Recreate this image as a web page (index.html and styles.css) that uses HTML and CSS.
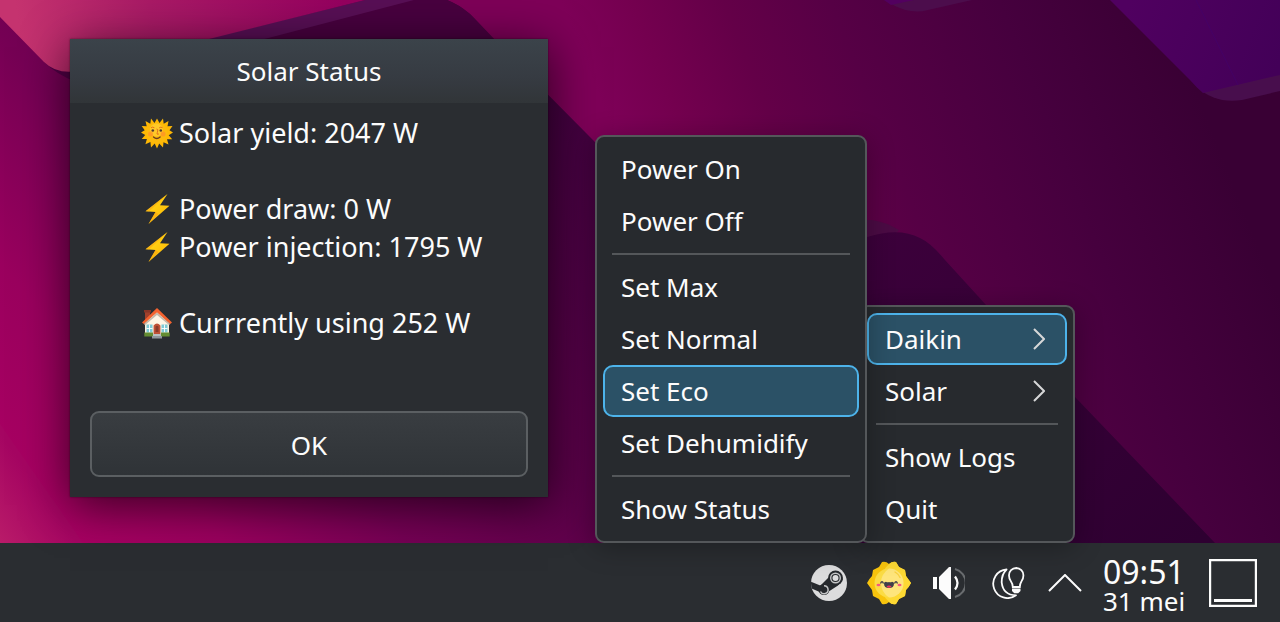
FILE: index.html
```html
<!DOCTYPE html>
<html lang="nl">
<head>
<meta charset="utf-8">
<meta name="viewport" content="width=device-width, initial-scale=1">
<title>Desktop</title>
<link rel="stylesheet" href="styles.css">
</head>
<body>
<svg width="0" height="0" class="defs" aria-hidden="true">
  <defs>
    <linearGradient id="boltFill" x1="0" y1="0" x2="1" y2="1"><stop offset="0" stop-color="#ffe11f"/><stop offset="1" stop-color="#ffb300"/></linearGradient>
    <symbol id="bolt" viewBox="0 0 32 32">
      <path d="M26.500 1 4.500 18.300l10 .6L7.500 31 28.500 12.800l-9.500-.6z" fill="url(#boltFill)"/>
      <path d="M26.500 1 4.500 18.300l3.500.3z M14.500 18.900 7.500 31l10-10z" fill="#f9a312" opacity=".55"/>
    </symbol>
    <symbol id="chevron" viewBox="0 0 12 22"><path d="M1 1 11 11 1 21" fill="none" stroke="#d6d7d8" stroke-width="2"/></symbol>
  </defs>
</svg>

<main class="desktop">
  <svg class="wallpaper" viewBox="0 0 1280 543" preserveAspectRatio="none" aria-hidden="true">
    <defs>
      <linearGradient id="left" gradientUnits="userSpaceOnUse" x1="290" y1="-232" x2="-220" y2="176">
        <stop offset="0" stop-color="#43003f"/><stop offset=".37" stop-color="#5c0049"/><stop offset=".6" stop-color="#750054"/><stop offset=".82" stop-color="#9a005e"/><stop offset="1" stop-color="#a80062"/>
      </linearGradient>
      <linearGradient id="right" gradientUnits="userSpaceOnUse" x1="483" y1="-193" x2="1000" y2="-400">
        <stop offset="0" stop-color="#7e0058"/><stop offset=".12" stop-color="#74004f"/><stop offset=".27" stop-color="#640048"/><stop offset=".45" stop-color="#560045"/><stop offset=".73" stop-color="#46003e"/><stop offset="1" stop-color="#390034"/>
      </linearGradient>
      <linearGradient id="pink" gradientUnits="userSpaceOnUse" x1="20" y1="40" x2="350" y2="0">
        <stop offset="0" stop-color="#c5336f"/><stop offset=".4" stop-color="#a91a66"/><stop offset="1" stop-color="#94005f"/>
      </linearGradient>
      <linearGradient id="corner" gradientUnits="userSpaceOnUse" x1="0" y1="543" x2="52" y2="507">
        <stop offset="0" stop-color="#b91b69"/><stop offset="1" stop-color="#a50562"/>
      </linearGradient>
      <linearGradient id="violet" gradientUnits="userSpaceOnUse" x1="1130" y1="0" x2="1280" y2="60">
        <stop offset="0" stop-color="#500060"/><stop offset="1" stop-color="#430058"/>
      </linearGradient>
      <linearGradient id="dark" gradientUnits="userSpaceOnUse" x1="870" y1="230" x2="1200" y2="540">
        <stop offset="0" stop-color="#3c003b"/><stop offset="1" stop-color="#2e0031"/>
      </linearGradient>
    </defs>
    <rect width="1280" height="543" fill="url(#right)"/>
    <path d="M0 0H447Q458 4 470 14Q480 24 493 39L1000 551H0z" fill="url(#left)"/>
    <path d="M365 0H447Q458 4 470 14Q480 24 520 66L200 60z" fill="#48003f"/>
    <path d="M365 0H414L230 48H170z" fill="#580f55"/>
    <path d="M44 62Q56 74 76 82L110 70z" fill="#500045"/>
    <path d="M0 0H365L209 39 90 68Q60 78 44 62L0 17z" fill="url(#pink)"/>
    <path d="M0 424 83 543H0z" fill="url(#corner)"/>
    <path d="M840 220H872Q886 222 899 230L890 240H840z" fill="#4b0b44"/>
    <path d="M840 245 867 237Q899 227 920 238Q931 243 945 260L987 306 1075 397 1215 543H840z" fill="url(#dark)"/>
    <path d="M884 0 891 4Q911 15 928 10L972 0z" fill="#4c0d4c"/>
    <path d="M884 0 891 5 914 0z" fill="#52005f"/>
    <path d="M1197 87Q1215 104 1242 100L1280 91V70z" fill="#480e4d"/>
    <path d="M1110 0H1280V75L1203 93Q1197 88 1190 80z" fill="url(#violet)"/>
    <path d="M1196 0 1238 85" stroke="#430070" opacity=".5"/>
  </svg>

  <section class="dialog" role="dialog" aria-labelledby="dialog-title">
    <header class="dialog-header"><h1 id="dialog-title" class="dialog-title">Solar Status</h1></header>
    <div class="dialog-body">
      <p class="reading">
        <svg class="emoji" viewBox="0 0 32 32" role="img" aria-label="Sun"><path d="M16 1.500l2.500 4.500L22 1.500l.7 5.200L27.500 4l-1 5.200 5-.2-3 4.200L32 15.500l-4.300 2.700 3.500 4-5.200 0 1.500 5.200-5-2.200L22 30.500l-3.800-4L16 31.500l-2.300-5L10 30.500l-.6-5.400-5 2.200 1.500-5.200-5.200 0 3.500-4L0 15.500l3.700-2.300L.7 9l5 .2L4.500 4l4.800 2.700L10 1.500l3.500 4.500z" fill="#ffb804"/><circle cx="16" cy="16" r="10.500" fill="#fdba0c"/><circle cx="15.500" cy="13" r="6.500" fill="#ffc928"/><circle cx="9.500" cy="17" r="2.500" fill="#ff8f2c" opacity=".7"/><circle cx="22" cy="17" r="2.500" fill="#ff8f2c" opacity=".7"/><circle cx="11.800" cy="13.500" r="1.300" fill="#543930"/><circle cx="19.800" cy="13.500" r="1.300" fill="#543930"/><path d="M10 10.800q1.700-1.300 3.400 0M18.200 10.800q1.700-1.300 3.400 0M15.500 12q1.800 0 1.200 2t-.7 3q1.300.8 2-.4" fill="none" stroke="#e2701d"/><path d="M12.500 20q3.300 3 6.600 0" fill="none" stroke="#6d3d20" stroke-width="1.300" stroke-linecap="round"/></svg>
        <span>Solar yield: 2047 W</span>
      </p>
      <p class="reading spaced"><svg class="emoji" role="img" aria-label="Power"><use href="#bolt"/></svg><span>Power draw: 0 W</span></p>
      <p class="reading"><svg class="emoji" role="img" aria-label="Power"><use href="#bolt"/></svg><span>Power injection: 1795 W</span></p>
      <p class="reading spaced">
        <svg class="emoji" viewBox="0 0 32 32" role="img" aria-label="House"><path d="M4 4h5v11H4z" fill="#a0402c"/><path d="M3 3h7v2.500H3z" fill="#853527"/><path d="M4 16 16 3.500 28 16v13H4z" fill="#fdf1de"/><path d="M6.500 15.500 16 6l9.500 9.500v2h-19z" fill="#fff6e6"/><path d="M16 1 1 15.500l1.800 1.500L16 5.500 29.200 17l1.800-1.500z" fill="#f4622f"/><path d="M16 5.500 2.800 17 4 18 16 8l12 10 1.200-1z" fill="#c7b8a8"/><path d="M5.500 17.500h6v8h-6zM20.500 17.500h6v8h-6z" fill="#7ecbd7"/><path d="M8.500 17.500v8M5.500 21.500h6M23.500 17.500v8M20.500 21.500h6" stroke="#fff" stroke-width=".9"/><path d="M12.600 27.500V18.500Q16 14.500 19.400 18.500v9z" fill="#bf5136"/><path d="M14.500 25v-5.500q1.500-1.500 3 0V25z" fill="#8a3a2a"/><path d="M3.300 25.500h8.700v4H3.300zM20 25.500h8.700v4H20z" fill="#648d32"/><path d="M12 27h8v2h-8z" fill="#b9bfc2"/><path d="M11 29h10v2.500H11z" fill="#90989c"/></svg>
        <span>Currrently using 252 W</span>
      </p>
    </div>
    <footer class="dialog-footer"><button class="ok" type="button">OK</button></footer>
  </section>

  <div class="menus">
    <div class="menu submenu" role="menu" aria-label="Daikin">
      <button class="item" role="menuitem">Power On</button>
      <button class="item" role="menuitem">Power Off</button>
      <hr class="separator">
      <button class="item" role="menuitem">Set Max</button>
      <button class="item" role="menuitem">Set Normal</button>
      <button class="item selected" role="menuitem">Set Eco</button>
      <button class="item" role="menuitem">Set Dehumidify</button>
      <hr class="separator">
      <button class="item" role="menuitem">Show Status</button>
    </div>
    <div class="menu rootmenu" role="menu" aria-label="Tray">
      <button class="item selected" role="menuitem" aria-haspopup="menu">Daikin<svg class="chevron"><use href="#chevron"/></svg></button>
      <button class="item" role="menuitem" aria-haspopup="menu">Solar<svg class="chevron"><use href="#chevron"/></svg></button>
      <hr class="separator">
      <button class="item" role="menuitem">Show Logs</button>
      <button class="item" role="menuitem">Quit</button>
    </div>
  </div>
</main>

<footer class="taskbar">
  <button class="tray" type="button" aria-label="Steam">
    <svg width="38" height="38" viewBox="0 0 38 38">
      <defs><clipPath id="disc"><circle cx="19" cy="19" r="18"/></clipPath></defs>
      <circle cx="19" cy="19" r="18" fill="#dcdcdd"/>
      <g clip-path="url(#disc)" fill="#26292d">
        <circle cx="25.500" cy="14" r="7.500"/>
        <circle cx="14" cy="25.500" r="5.500"/>
        <path d="M18 14 33 15 28 21.500 19.500 27 10 22z"/>
        <path d="M-1 17 14 23 12 29-1 23.500z"/>
      </g>
      <circle cx="25.500" cy="14" r="4.800" fill="none" stroke="#c4c5c6" stroke-width="1.400"/>
      <circle cx="25.500" cy="14" r="3" fill="#dcdcdd"/>
      <path d="M10.500 27.500a4 4 0 1 0 3.500-5.800" fill="none" stroke="#c4c5c6" stroke-width="1.500"/>
    </svg>
  </button>
  <button class="tray" type="button" aria-label="Solar">
    <svg width="44" height="44" viewBox="0 0 44 44"><path d="M22 3Q25.500 0 29 1L32 6 38 9 39 15 44 22Q42 26 39 29L38 35 32 38 29 43Q25 44 22 41Q19 44 15 43L12 38 6 35 5 29 0 22Q2 18 5 15L6 9 12 6 15 1Q19 0 22 3z" fill="#f8c40d"/><path d="M22 3Q25.500 0 29 1L32 6 38 9 39 15 44 22Q42 26 39 29L38 35 32 38 29 43Q25 44 22 41Q14 34 14 22T22 3z" fill="#fdd934"/><circle cx="22" cy="22" r="14.500" fill="#fbdc45"/><path d="M22 7.500a14.500 14.500 0 0 1 0 29Q14 31 14 22T22 7.500z" fill="#fee57c"/><path d="M28 11q3.500 2 5 5.500" fill="none" stroke="#f8d040" stroke-width="1.400" stroke-linecap="round"/><ellipse cx="11.500" cy="24" rx="2" ry="1.200" fill="#f5587f"/><ellipse cx="32.500" cy="24" rx="2" ry="1.200" fill="#f5587f"/><path d="M13.500 22.500q1.500-3.500 3 0M27.500 22.500q1.500-3.500 3 0" fill="none" stroke="#40404a" stroke-width="1.300"/><path d="M17 22.500q0-1.700 2-1.700 1.500.9 3 .3 1.500.6 3-.3 2 0 2 1.700 0 4.500-5 4.500t-5-4.500z" fill="#40404a"/><path d="M19.500 25.500q2.500-2 5 0-2.500 2.500-5 0z" fill="#f4355f"/></svg>
  </button>
  <button class="tray" type="button" aria-label="Volume">
    <svg width="32" height="32" viewBox="0 0 32 32"><path d="M0 10h4v12H0zM6 10 16 0h2v32h-2L6 22z" fill="#fcfcfc"/><path d="M22 9.500q5 6.500 0 13" fill="none" stroke="#fcfcfc" stroke-width="2.200"/><path d="M22 2A14.500 14.500 0 0 1 22 30" fill="none" stroke="#696c6f" stroke-width="2"/></svg>
  </button>
  <button class="tray" type="button" aria-label="Night colour">
    <svg width="34" height="32" viewBox="0 0 34 32" fill="none" stroke="#fcfcfc" stroke-width="1.800"><path d="M14.500 2.500A14.300 14.300 0 1 0 24 28.300Q11 28 9.700 15.500 9.500 7.500 14.500 2.500z" stroke-linejoin="round"/><path d="M20.800 20q0-3-1.800-5.500-2-2.500-2-6A7.300 7.300 0 0 1 24.200 1a7.300 7.300 0 0 1 7.200 7.500q0 3.500-2 6-1.600 2.500-1.600 5.500z"/><path d="M20 21.500h8.500v2.500l-2.300 2.200h-3.900L20 24z" fill="#fcfcfc" stroke="none"/></svg>
  </button>
  <button class="tray narrow" type="button" aria-label="Show hidden icons">
    <svg width="34" height="18" viewBox="0 0 34 18"><path d="M1 17 17 1 33 17" fill="none" stroke="#fcfcfc" stroke-width="2"/></svg>
  </button>
  <button class="clock" type="button"><span class="time">09:51</span><span class="date">31 mei</span></button>
  <button class="show-desktop" type="button" aria-label="Show desktop">
    <svg width="48" height="48" viewBox="0 0 48 48"><path d="M1 1h46v46H1z" fill="none" stroke="#fcfcfc" stroke-width="2.400"/><path d="M5 40h38v3H5z" fill="#fcfcfc"/></svg>
  </button>
</footer>
</body>
</html>
```
FILE: styles.css
```css
* {
  box-sizing: border-box;
}

body {
  margin: 0;
  height: 100vh;
  display: flex;
  flex-direction: column;
  overflow: hidden;
  background: #2a2d31;
  color: #fcfcfc;
  font-family: "Noto Sans", sans-serif;
  font-size: 26px;
}

button {
  margin: 0;
  padding: 0;
  border: 0;
  background: none;
  color: inherit;
  font: inherit;
}

svg {
  display: block;
  flex: none;
}

.defs {
  position: absolute;
}

.desktop {
  position: relative;
  flex: 1;
  min-height: 0;
}

.wallpaper {
  position: absolute;
  inset: 0;
  width: 100%;
  height: 100%;
}

/* Dialog window */
.dialog {
  position: absolute;
  left: 70px;
  top: 39px;
  width: 478px;
  display: flex;
  flex-direction: column;
  background: #2a2d31;
  box-shadow: 0 8px 44px rgba(0, 0, 0, 0.65), 0 0 2px rgba(0, 0, 0, 0.5);
}

.dialog-header {
  padding: 13px 20px;
  background: linear-gradient(#3b434a, #363b42 60%, #313538);
}

.dialog-title {
  margin: 0;
  font-size: 26px;
  font-weight: 400;
  line-height: 38px;
  text-align: center;
}

.dialog-body {
  padding: 11px 20px 69px 71px;
}

.reading {
  display: flex;
  align-items: center;
  gap: 6px;
  margin: 0;
  font-size: 27px;
  line-height: 38px;
  white-space: nowrap;
}

.spaced {
  margin-top: 38px;
}

.emoji {
  width: 32px;
  height: 32px;
}

.dialog-footer {
  display: flex;
  padding: 0 20px 20px;
}

.ok {
  flex: 1;
  padding: 13px 12px 11px;
  border: 2px solid #5b5f62;
  border-radius: 9px;
  background: linear-gradient(#393d41, #2f3337);
  line-height: 38px;
}

/* Tray menus */
.menus {
  position: absolute;
  right: 205px;
  bottom: 0;
  display: flex;
  align-items: flex-end;
}

.menu {
  display: flex;
  flex-direction: column;
  padding: 6px;
  border: 2px solid #54575a;
  border-radius: 9px;
  background: #272a2e;
  box-shadow: 0 4px 28px rgba(0, 0, 0, 0.3);
}

.submenu {
  z-index: 1;
  width: 272px;
}

.rootmenu {
  width: 216px;
  margin-left: -8px;
}

.item {
  display: flex;
  align-items: center;
  justify-content: space-between;
  padding: 6px 20px 6px 16px;
  border: 2px solid transparent;
  border-radius: 10px;
  line-height: 36px;
  text-align: left;
}

.selected {
  border-color: #4db3ea;
  background: #2b5166;
}

.chevron {
  width: 12px;
  height: 22px;
}

.separator {
  width: auto;
  height: 2px;
  margin: 6px 9px;
  border: 0;
  background: #54575a;
}

/* Panel */
.taskbar {
  display: flex;
  align-items: center;
  justify-content: flex-end;
  height: 79px;
  padding: 0 23px;
}

.tray {
  display: flex;
  justify-content: center;
  width: 60px;
}

.narrow {
  width: 52px;
}

.clock {
  display: flex;
  flex-direction: column;
  width: 106px;
  padding: 4px 0 0 12px;
  text-align: left;
}

.time {
  font-size: 32px;
  line-height: 32px;
}

.date {
  font-size: 26px;
  line-height: 26px;
}

.show-desktop {
  margin-left: 12px;
}
```
